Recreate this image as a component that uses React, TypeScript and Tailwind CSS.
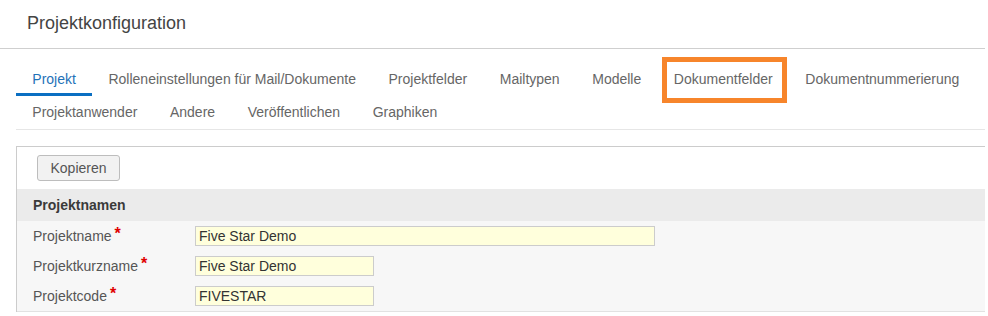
import React from 'react';

const tabs = [
  'Projekt',
  'Rolleneinstellungen für Mail/Dokumente',
  'Projektfelder',
  'Mailtypen',
  'Modelle',
  'Dokumentfelder',
  'Dokumentnummerierung',
  'Projektanwender',
  'Andere',
  'Veröffentlichen',
  'Graphiken',
];

const fields = [
  { label: 'Projektname', value: 'Five Star Demo', width: 'w-[460px]' },
  { label: 'Projektkurzname', value: 'Five Star Demo', width: 'w-[179px]' },
  { label: 'Projektcode', value: 'FIVESTAR', width: 'w-[179px]' },
];

const App: React.FC = () => {
  return (
    <div className="relative w-[988px] h-[316px] overflow-hidden bg-white font-['Liberation_Sans',Arial,sans-serif] text-[14px] text-[#333]">
      {/* header */}
      <div className="mr-[3px] h-[49px] border-b border-[#cfcfcf] pl-[27px] pt-[10px]">
        <h1 className="text-[18px] leading-[26px] text-[#444]">Projektkonfiguration</h1>
      </div>

      {/* tabs */}
      <div className="ml-4 mr-[3px] pt-[14px] flex flex-wrap border-b border-[#e6e6e6]">
        {tabs.map((t, i) => (
          <div
            key={t}
            className={
              i === 0
                ? 'h-[33px] px-[16.3px] flex items-center border-b-[3px] border-[#0a6fc2] pt-[3px] text-[#1f72b8]'
                : 'h-[33px] px-[16.3px] flex items-center text-[#666]'
            }
          >
            {t}
          </div>
        ))}
      </div>

      {/* panel */}
      <div className="ml-4 mr-[3px] mt-4 border-l border-t border-[#cccccc]">
        <div className="h-[42px] pl-5 pt-2">
          <button className="w-[83px] h-[26px] rounded-[3px] border border-[#bdbdbd] bg-[#f2f2f2] text-[14px] text-[#555]">
            Kopieren
          </button>
        </div>
        <div className="h-[32px] bg-[#ebebeb] pl-4 flex items-center font-bold text-[#3a3a3a]">Projektnamen</div>
        <div className="bg-[#f7f7f7] border-b border-[#e2e2e2]">
          {fields.map(f => (
            <div key={f.label} className="h-[30px] pl-4 flex items-center">
              <div className="w-[162px] flex items-center text-[#555]">
                <span>{f.label}</span>
                <span className="ml-[3px] mb-[5px] text-[16px] leading-none font-bold text-[#e00000]">*</span>
              </div>
              <div className={`${f.width} h-[20px] border border-[#cccccc] bg-[#ffffdc] pl-[3px] flex items-center text-[#333] leading-none`}>
                {f.value}
              </div>
            </div>
          ))}
        </div>
      </div>

      {/* annotation highlight */}
      <div className="absolute left-[662px] top-[57px] w-[125px] h-[46px] border-[5px] border-[#f7852b]" />
    </div>
  );
};

export default App;
